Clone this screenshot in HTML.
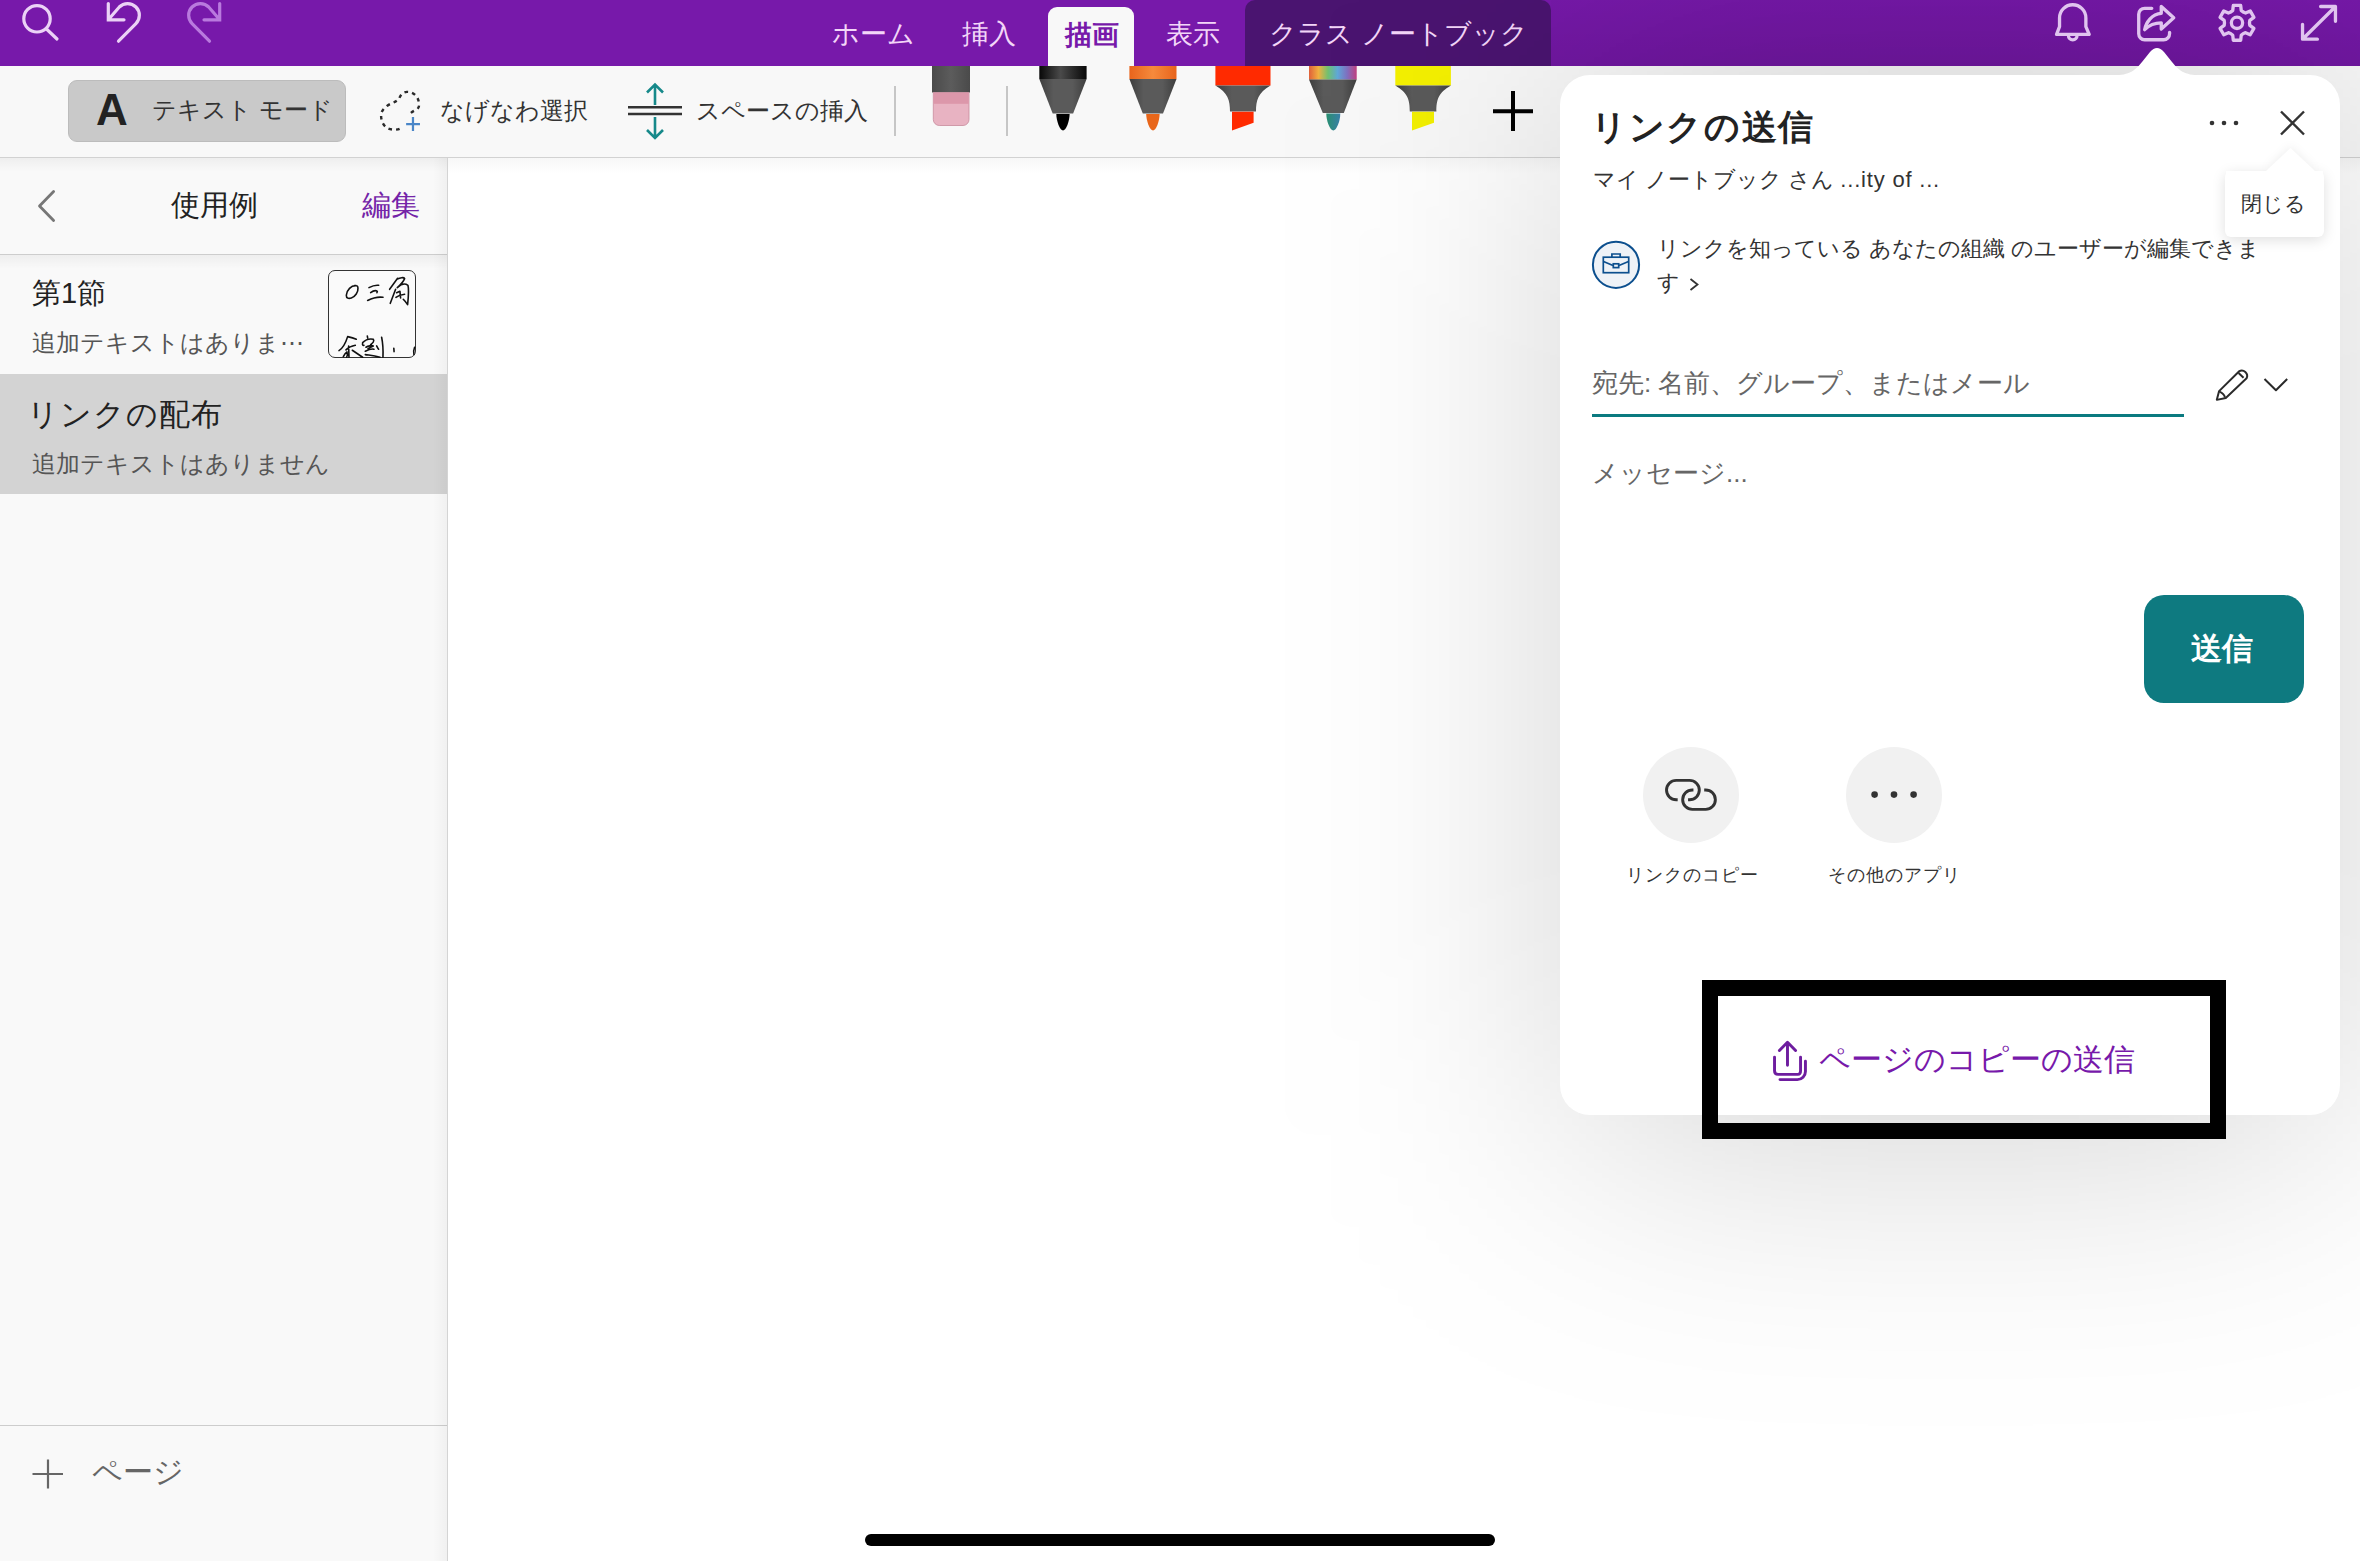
<!DOCTYPE html>
<html><head><meta charset="utf-8">
<style>
*{box-sizing:border-box;margin:0;padding:0}
html,body{width:2360px;height:1561px;overflow:hidden;background:#fff;font-family:"Liberation Sans",sans-serif;position:relative}
.abs{position:absolute}
.t{position:absolute;white-space:nowrap;line-height:1}
svg.full{position:absolute;left:0;top:0;width:2360px;height:1561px;overflow:visible}
</style></head><body>

<!-- ============ BASE LAYER ============ -->
<div class="abs" style="left:0;top:0;width:2360px;height:66px;background:#7719aa"></div>
<div class="abs" style="left:1048px;top:7px;width:86px;height:60px;background:#f8f8f8;border-radius:9px 9px 0 0"></div>
<div class="abs" style="left:1245px;top:0;width:306px;height:66px;background:#4a1470;border-radius:10px 10px 0 0"></div>
<div class="t" style="left:832px;top:21px;font-size:27px;color:#f3d6f8">ホーム</div>
<div class="t" style="left:962px;top:21px;font-size:27px;color:#f3d6f8">挿入</div>
<div class="t" style="left:1065px;top:22px;font-size:27px;color:#7719aa;font-weight:bold">描画</div>
<div class="t" style="left:1166px;top:21px;font-size:27px;color:#f3d6f8">表示</div>
<div class="t" style="left:1269px;top:21px;font-size:27px;color:#f3d6f8">クラス ノートブック</div>

<div class="abs" style="left:0;top:66px;width:2360px;height:92px;background:#f8f8f8;border-bottom:1px solid #d2d2d2"></div>
<div class="abs" style="left:68px;top:80px;width:278px;height:62px;background:#c9c9c9;border:1px solid #bcbcbc;border-radius:9px"></div>
<div class="t" style="left:96px;top:88px;font-size:44px;font-weight:bold;color:#222">A</div>
<div class="t" style="left:152px;top:98px;font-size:24px;color:#333">テキスト モード</div>
<div class="t" style="left:440px;top:99px;font-size:24px;color:#333">なげなわ選択</div>
<div class="t" style="left:696px;top:99px;font-size:24px;color:#333">スペースの挿入</div>
<div class="abs" style="left:894px;top:86px;width:2px;height:50px;background:#c6c6c6"></div>
<div class="abs" style="left:1006px;top:86px;width:2px;height:50px;background:#c6c6c6"></div>

<div class="abs" style="left:0;top:158px;width:448px;height:1403px;background:#f9f9f9;border-right:1px solid #d4d4d4"></div>
<div class="abs" style="left:0;top:254px;width:447px;height:1px;background:#cdcdcd"></div>
<div class="t" style="left:171px;top:191px;font-size:29px;color:#222">使用例</div>
<div class="t" style="left:362px;top:191px;font-size:29px;color:#7424a8">編集</div>
<div class="t" style="left:32px;top:279px;font-size:29px;color:#222">第1節</div>
<div class="t" style="left:32px;top:331px;font-size:24px;color:#555">追加テキストはありま⋯</div>
<div class="abs" style="left:328px;top:270px;width:88px;height:88px;background:#fafafa;border:1.4px solid #333;border-radius:7px"></div>
<div class="abs" style="left:0;top:374px;width:447px;height:120px;background:#d3d3d3"></div>
<div class="t" style="left:27px;top:399px;font-size:31px;color:#222;letter-spacing:1px">リンクの配布</div>
<div class="t" style="left:32px;top:452px;font-size:24px;color:#555">追加テキストはありません</div>
<div class="abs" style="left:0;top:1425px;width:447px;height:1px;background:#cdcdcd"></div>
<div class="abs" style="left:0;top:158px;width:447px;height:14px;background:linear-gradient(rgba(0,0,0,0.045),rgba(0,0,0,0))"></div>
<div class="abs" style="left:0;top:255px;width:447px;height:14px;background:linear-gradient(rgba(0,0,0,0.045),rgba(0,0,0,0))"></div>
<div class="abs" style="left:433px;top:158px;width:14px;height:1403px;background:linear-gradient(90deg,rgba(0,0,0,0),rgba(0,0,0,0.035))"></div>
<div class="abs" style="left:448px;top:158px;width:1912px;height:16px;background:linear-gradient(rgba(0,0,0,0.03),rgba(0,0,0,0))"></div>
<div class="t" style="left:92px;top:1457px;font-size:30px;color:#666">ページ</div>

<div class="abs" style="left:865px;top:1534px;width:630px;height:12px;background:#000;border-radius:6px"></div>

<svg class="full" viewBox="0 0 2360 1561">
 <defs>
  <linearGradient id="gBlackBand" x1="0" x2="1"><stop offset="0" stop-color="#080808"/><stop offset="0.45" stop-color="#4a4a4a"/><stop offset="1" stop-color="#080808"/></linearGradient>
  <linearGradient id="gCone" x1="0" x2="1"><stop offset="0" stop-color="#3e3e3e"/><stop offset="0.3" stop-color="#5a5a5a"/><stop offset="0.7" stop-color="#5a5a5a"/><stop offset="1" stop-color="#3e3e3e"/></linearGradient>
  <linearGradient id="gOrange" x1="0" x2="1"><stop offset="0" stop-color="#e8641c"/><stop offset="0.5" stop-color="#f58a3c"/><stop offset="1" stop-color="#e8641c"/></linearGradient>
  <linearGradient id="gRainbow" x1="0" x2="1"><stop offset="0" stop-color="#e0603a"/><stop offset="0.2" stop-color="#f0b040"/><stop offset="0.4" stop-color="#70c070"/><stop offset="0.6" stop-color="#60a8d8"/><stop offset="0.8" stop-color="#8070c0"/><stop offset="1" stop-color="#c04080"/></linearGradient>
  <linearGradient id="gTeal" x1="0" x2="1"><stop offset="0" stop-color="#2a9070"/><stop offset="1" stop-color="#3a80a8"/></linearGradient>
  <linearGradient id="gEraserTop" x1="0" x2="1"><stop offset="0" stop-color="#4a4a4a"/><stop offset="0.5" stop-color="#5c5c5c"/><stop offset="1" stop-color="#4a4a4a"/></linearGradient>
 </defs>
 <!-- top-left icons -->
 <g fill="none" stroke="#ebd2f6" stroke-width="3.2" stroke-linecap="round">
  <circle cx="37" cy="18.8" r="13.2"/>
  <path d="M47 29.5 L57 39"/>
  <path d="M108.3 3.6 V19.8 H124 M108.3 19.8 L119.3 7.0 A11.7 11.7 0 0 1 135.9 23.6 L118.5 41.2"/>
 </g>
 <g fill="none" stroke="#b97ade" stroke-width="3.2" stroke-linecap="round">
  <path d="M219.7 3.6 V19.8 H204 M219.7 19.8 L208.7 7.0 A11.7 11.7 0 0 0 192.1 23.6 L209.5 41.2"/>
 </g>
 <!-- toolbar icons: lasso -->
 <g transform="translate(370,80) scale(0.03844)">
  <path d="M770 1270 C680 1310 500 1300 410 1220 C300 1130 270 950 300 850 C330 740 470 640 580 600 C680 560 740 520 765 470 C800 380 850 320 960 310 C1100 300 1250 400 1275 600 C1290 700 1250 760 1170 790 C1090 830 1020 880 995 925" fill="none" stroke="#2a2a2a" stroke-width="62" stroke-dasharray="95 105"/>
  <path d="M940 1145 H1300 M1118 965 V1325" fill="none" stroke="#4a86c8" stroke-width="58"/>
 </g>
 <!-- space insert -->
 <g fill="none" stroke-width="2.6">
  <path d="M628 107.3 H682 M628 114 H682" stroke="#333"/>
  <path d="M655 84.5 V105 M647 92.5 L655 84.5 L663 92.5 M655 117 V138 M647 130 L655 138 L663 130" stroke="#16898a"/>
 </g>
 <!-- eraser -->
 <rect x="932" y="66" width="38" height="26.5" fill="url(#gEraserTop)"/>
 <path d="M933.3 92.5 H969 V119.5 A6 6 0 0 1 963 125.5 H939.3 A6 6 0 0 1 933.3 119.5 Z" fill="#e8b3c2" stroke="#c88a9c" stroke-width="0.8"/>
 <rect x="933.6" y="92.8" width="35" height="11" fill="#dc97aa"/>
 <!-- black pen -->
 <rect x="1039.3" y="66" width="47.3" height="13" fill="url(#gBlackBand)"/>
 <path d="M1039.3 79 H1086.6 L1073.1 113.4 H1052.7 Z" fill="url(#gCone)"/>
 <path d="M1056.3 114 H1069.6 C1069.6 121 1066 130.5 1063 130.5 C1060 130.5 1056.3 121 1056.3 114 Z" fill="#000"/>
 <!-- orange pen -->
 <rect x="1129.4" y="66" width="47.1" height="13" fill="url(#gOrange)"/>
 <path d="M1129.4 79 H1176.5 L1163 113.4 H1142.8 Z" fill="url(#gCone)"/>
 <path d="M1146.2 114 H1159.6 C1159.6 121 1156 130.5 1153 130.5 C1150 130.5 1146.2 121 1146.2 114 Z" fill="#e8661a"/>
 <!-- red marker -->
 <rect x="1215.4" y="66" width="55.1" height="19.5" fill="#ff2a00"/>
 <path d="M1215.4 85.5 H1270.5 C1258 93 1256 100 1256 111.5 H1230 C1230 100 1228 93 1215.4 85.5 Z" fill="url(#gCone)"/>
 <path d="M1232 111.8 H1253.6 V122.8 L1232 130.5 Z" fill="#ff2a00"/>
 <!-- rainbow pen -->
 <rect x="1309" y="66" width="47.7" height="13.6" fill="url(#gRainbow)"/>
 <path d="M1309 79.6 H1356.7 L1343.8 113 H1322.8 Z" fill="url(#gCone)"/>
 <path d="M1326.3 113.5 H1340.3 C1340.3 121 1336.5 130.5 1333.3 130.5 C1330 130.5 1326.3 121 1326.3 113.5 Z" fill="url(#gTeal)"/>
 <!-- yellow marker -->
 <rect x="1395.3" y="66" width="55.6" height="19.5" fill="#f4f000"/>
 <path d="M1395.3 85.5 H1450.9 C1438 93 1436.4 100 1436.4 111.5 H1409.8 C1409.8 100 1408 93 1395.3 85.5 Z" fill="url(#gCone)"/>
 <path d="M1412 111.8 H1434 V122.8 L1412 130.5 Z" fill="#f2ef00"/>
 <!-- plus -->
 <path d="M1493 111.2 H1533 M1513 91 V131" stroke="#000" stroke-width="4" fill="none"/>
 <!-- sidebar icons -->
 <path d="M53.6 191.5 L39.5 206 L53.6 220.5" fill="none" stroke="#777" stroke-width="2.8" stroke-linecap="round" stroke-linejoin="round"/>
 <path d="M32.5 1474 H63 M48 1459.5 V1488.5" fill="none" stroke="#666" stroke-width="2.2"/>
 <!-- thumbnail handwriting -->
 <g transform="translate(320,262) scale(0.06662)" fill="none" stroke="#111" stroke-width="24" stroke-linecap="round" stroke-linejoin="round">
  <path d="M540 355 C470 350 400 420 395 500 C393 545 430 555 470 540 C530 520 575 450 570 390 C568 360 550 350 520 355"/>
  <path d="M735 385 C780 360 840 345 880 350 M760 460 C800 430 840 425 860 440 L855 460 M715 578 C790 540 880 520 945 530"/>
  <path d="M1045 410 L1165 245 M1160 255 C1200 235 1260 225 1270 250 C1250 300 1200 350 1160 385 M1165 380 C1220 330 1280 320 1320 350 C1335 400 1330 500 1315 640 C1290 600 1270 580 1250 560 M1135 410 L1055 620 M1150 460 L1200 440 L1210 540 M1140 530 C1180 500 1230 490 1270 485"/>
  <path d="M285 1330 C350 1290 390 1200 415 1120 C460 1130 500 1140 545 1160 M390 1320 C430 1280 470 1260 530 1250 M430 1260 L435 1430 M350 1420 C370 1380 390 1360 405 1350 C415 1380 410 1410 400 1430 M485 1325 L640 1430"/>
  <path d="M710 1110 L715 1140 M640 1210 C680 1170 750 1150 800 1160 C820 1190 790 1220 760 1240 M640 1220 C630 1240 650 1260 660 1250 M690 1280 C720 1260 780 1250 800 1260 L720 1300 M680 1340 C720 1320 780 1300 810 1310 M680 1390 C740 1400 800 1400 900 1430 M850 1260 C860 1280 870 1300 880 1310 M925 1130 C940 1200 950 1300 945 1430"/>
  <path d="M1108 1295 L1112 1345 M1420 1280 C1405 1320 1400 1360 1410 1390"/>
 </g>
</svg>

<!-- ============ POPUP ============ -->
<div class="abs" style="left:1575px;top:95px;width:750px;height:1040px;border-radius:30px;background:rgba(0,0,0,0.19);filter:blur(140px)"></div>
<div class="abs" style="left:1551px;top:0;width:809px;height:66px;background:linear-gradient(rgba(40,0,60,0.02),rgba(40,0,60,0.10))"></div>
<svg class="full" viewBox="0 0 2360 1561">
 <path d="M2110 75.5 C2128 75.5 2134 72 2142 62 L2150 52 Q2157 44 2164 52 L2172 62 C2180 72 2186 75.5 2204 75.5 Z" fill="#fff"/>
</svg>
<div class="abs" style="left:1560px;top:75px;width:780px;height:1040px;background:#fff;border-radius:30px"></div>

<!-- top-right icons (drawn after shadow) -->
<svg class="full" viewBox="0 0 2360 1561">
 <g transform="translate(2045,0) scale(0.05932)" fill="none" stroke="#e0c4ef" stroke-width="56" stroke-linejoin="round" stroke-linecap="round">
  <path d="M245 450 V302 A222 222 0 0 1 689 302 V450 L745 580 H195 L245 450 Z"/>
  <path d="M395 600 A72 72 0 0 0 540 600"/>
  <path d="M1800 140 H1680 A100 100 0 0 0 1580 240 V570 A100 100 0 0 0 1680 670 H2000 A100 100 0 0 0 2100 570 V545"/>
  <path d="M1680 500 C1700 380 1800 235 1960 225 V110 L2170 300 L1960 490 V385 C1850 385 1750 430 1680 500 Z"/>
 </g>
 <g transform="translate(2210,0) scale(0.05932)" fill="none" stroke="#e0c4ef" stroke-width="56" stroke-linejoin="round" stroke-linecap="round">
  <path d="M383 177 L393 92 L517 92 L527 177 A176 176 0 0 0 599 219 L678 184 L740 292 L671 343 A176 176 0 0 0 671 427 L740 478 L678 586 L599 551 A176 176 0 0 0 527 593 L517 678 L393 678 L383 593 A176 176 0 0 0 311 551 L232 586 L170 478 L239 427 A176 176 0 0 0 239 343 L170 292 L232 184 L311 219 A176 176 0 0 0 383 177 Z"/>
  <circle cx="455" cy="385" r="95"/>
  <path d="M1560 410 V660 H1810 M1865 110 H2115 V360 M1580 640 L2095 130"/>
 </g>
</svg>

<!-- popup content -->
<div class="abs" style="left:1643px;top:747px;width:96px;height:96px;background:#f1f1f1;border-radius:50%"></div>
<div class="abs" style="left:1846px;top:747px;width:96px;height:96px;background:#f1f1f1;border-radius:50%"></div>

<div class="t" style="left:1591px;top:109px;font-size:35px;font-weight:bold;color:#222;letter-spacing:1.7px">リンクの送信</div>
<div class="t" style="left:1593px;top:169px;font-size:22px;color:#333">マイ ノートブック さん <span style="letter-spacing:0.8px">...ity of ...</span></div>
<svg class="full" viewBox="0 0 2360 1561">
 <g fill="none" stroke="#333" stroke-width="3" stroke-linecap="round">
  <circle cx="2212" cy="123" r="2.3" fill="#333" stroke="none"/>
  <circle cx="2224" cy="123" r="2.3" fill="#333" stroke="none"/>
  <circle cx="2236" cy="123" r="2.3" fill="#333" stroke="none"/>
  <path d="M2281 111.5 L2304 134.5 M2304 111.5 L2281 134.5" stroke-linecap="butt" stroke-width="2.4"/>
 </g>
 <!-- briefcase -->
 <circle cx="1616" cy="264.8" r="23.1" fill="#eef2f7" stroke="#0c4f8e" stroke-width="2"/>
 <g fill="none" stroke="#0c4f8e" stroke-width="1.7">
  <rect x="1603.3" y="257.2" width="25.4" height="15.5"/>
  <path d="M1611.9 257.2 V254 H1620.2 V257.2"/>
  <path d="M1603.5 261.5 L1613 265.5 M1628.5 261.5 L1619 265.5"/>
  <rect x="1613.3" y="263.8" width="5.4" height="3.8" fill="#eef2f7"/>
 </g>
 <path d="M1690.5 279 L1697.5 284.5 L1690.5 290" fill="none" stroke="#333" stroke-width="1.8"/>
 <!-- pencil & chevron -->
 <g transform="translate(2205,360) scale(0.03814)" fill="none" stroke="#2a2a2a" stroke-width="52" stroke-linejoin="round">
  <path d="M310 1045 L370 815 L890 300 A140 140 0 0 1 1090 480 L545 995 Z"/>
  <path d="M880 340 L1010 465 M380 830 Q500 880 525 985"/>
  <path d="M1560 500 L1860 795 L2155 500"/>
 </g>
 <!-- link icon -->
 <g transform="translate(1655,765) scale(0.03844)" fill="none" stroke="#333" stroke-width="76">
  <path d="M590 905 H552 A252 252 0 0 1 552 400 H900 A252 252 0 0 1 900 905 H860"/>
  <path d="M1000 650 H972 A252 252 0 0 0 972 1155 H1318 A252 252 0 0 0 1318 650 H1280"/>
 </g>
 <!-- upload icon -->
 <g transform="translate(1760,1030) scale(0.03844)" fill="none" stroke="#6e1d9f" stroke-width="76" stroke-linecap="round" stroke-linejoin="round">
  <path d="M715 920 V340 M505 535 L715 320 L925 535"/>
  <path d="M378 710 V1060 Q378 1155 470 1155 H985 Q1055 1155 1055 1060 V710"/>
  <path d="M1182 815 V1080 A210 210 0 0 1 972 1290 H520"/>
 </g>
</svg>
<div class="t" style="left:1657px;top:238px;font-size:22px;color:#333">リンクを知っている あなたの組織 のユーザーが編集できま</div>
<div class="t" style="left:1657px;top:272px;font-size:22px;color:#333">す</div>
<div class="t" style="left:1592px;top:370px;font-size:26px;color:#666">宛先: 名前、グループ、またはメール</div>
<div class="abs" style="left:1592px;top:414px;width:592px;height:2.5px;background:#0b7a80"></div>
<div class="t" style="left:1592px;top:460px;font-size:26px;color:#666">メッセージ...</div>
<div class="abs" style="left:2144px;top:595px;width:160px;height:108px;background:#0e7a80;border-radius:20px"></div>
<div class="t" style="left:2191px;top:633px;font-size:31px;font-weight:bold;color:#fff">送信</div>
<svg class="full" viewBox="0 0 2360 1561">
 <circle cx="1874.6" cy="794.6" r="3.3" fill="#333"/>
 <circle cx="1894" cy="794.6" r="3.3" fill="#333"/>
 <circle cx="1913.6" cy="794.6" r="3.3" fill="#333"/>
</svg>
<div class="t" style="left:1626px;top:866px;font-size:18px;color:#333;letter-spacing:1px">リンクのコピー</div>
<div class="t" style="left:1828px;top:866px;font-size:18px;color:#333;letter-spacing:1px">その他のアプリ</div>
<div class="t" style="left:1819px;top:1044px;font-size:31px;color:#7719aa">ページのコピーの送信</div>

<!-- annotation box -->
<div class="abs" style="left:1702px;top:980px;width:524px;height:159px;border:16px solid #000"></div>

<!-- tooltip -->
<div class="abs" style="left:2225px;top:170.5px;width:99px;height:66px;background:#fff;border-radius:6px;box-shadow:0 3px 14px rgba(0,0,0,0.13)"></div>
<svg class="full" viewBox="0 0 2360 1561">
 <path d="M2266 171 L2290.5 148 L2315 171 Z" fill="#fff" style="filter:drop-shadow(0 -2px 4px rgba(0,0,0,0.06))"/>
 <rect x="2226" y="171" width="97" height="20" fill="#fff"/>
</svg>
<div class="t" style="left:2241px;top:193px;font-size:21px;color:#333">閉じる</div>

</body></html>
